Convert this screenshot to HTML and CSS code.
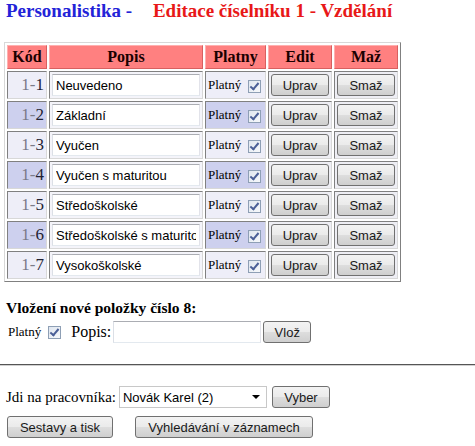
FILE: index.html
```html
<!DOCTYPE html>
<html lang="cs">
  <head>
    <meta charset="UTF-8" />
    <title>Personalistika - Editace číselníku</title>
    <link rel="stylesheet" href="styles.css">
  </head>
  <body>
    <div class="page">
      <h1 class="title">
        <span class="app">Personalistika -</span>
        <span class="sub">Editace číselníku 1 - Vzdělání</span>
      </h1>

      <table class="list">
        <thead>
          <tr>
            <th class="c-kod">Kód</th>
            <th class="c-popis">Popis</th>
            <th class="c-platny">Platny</th>
            <th class="c-edit">Edit</th>
            <th class="c-maz">Maž</th>
          </tr>
        </thead>
        <tbody>
          <tr class="odd">
            <td class="kod"><span class="pre">1-</span>1</td>
            <td class="popis"><input type="text" class="txt" value="Neuvedeno" /></td>
            <td class="platny">Platný <input type="checkbox" class="chk" checked /></td>
            <td class="act"><button class="btn btn-row">Uprav</button></td>
            <td class="act"><button class="btn btn-row">Smaž</button></td>
          </tr>
          <tr class="even">
            <td class="kod"><span class="pre">1-</span>2</td>
            <td class="popis"><input type="text" class="txt" value="Základní" /></td>
            <td class="platny">Platný <input type="checkbox" class="chk" checked /></td>
            <td class="act"><button class="btn btn-row">Uprav</button></td>
            <td class="act"><button class="btn btn-row">Smaž</button></td>
          </tr>
          <tr class="odd">
            <td class="kod"><span class="pre">1-</span>3</td>
            <td class="popis"><input type="text" class="txt" value="Vyučen" /></td>
            <td class="platny">Platný <input type="checkbox" class="chk" checked /></td>
            <td class="act"><button class="btn btn-row">Uprav</button></td>
            <td class="act"><button class="btn btn-row">Smaž</button></td>
          </tr>
          <tr class="even">
            <td class="kod"><span class="pre">1-</span>4</td>
            <td class="popis"><input type="text" class="txt" value="Vyučen s maturitou" /></td>
            <td class="platny">Platný <input type="checkbox" class="chk" checked /></td>
            <td class="act"><button class="btn btn-row">Uprav</button></td>
            <td class="act"><button class="btn btn-row">Smaž</button></td>
          </tr>
          <tr class="odd">
            <td class="kod"><span class="pre">1-</span>5</td>
            <td class="popis"><input type="text" class="txt" value="Středoškolské" /></td>
            <td class="platny">Platný <input type="checkbox" class="chk" checked /></td>
            <td class="act"><button class="btn btn-row">Uprav</button></td>
            <td class="act"><button class="btn btn-row">Smaž</button></td>
          </tr>
          <tr class="even">
            <td class="kod"><span class="pre">1-</span>6</td>
            <td class="popis"><input type="text" class="txt" value="Středoškolské s maturitou" /></td>
            <td class="platny">Platný <input type="checkbox" class="chk" checked /></td>
            <td class="act"><button class="btn btn-row">Uprav</button></td>
            <td class="act"><button class="btn btn-row">Smaž</button></td>
          </tr>
          <tr class="odd">
            <td class="kod"><span class="pre">1-</span>7</td>
            <td class="popis"><input type="text" class="txt" value="Vysokoškolské" /></td>
            <td class="platny">Platný <input type="checkbox" class="chk" checked /></td>
            <td class="act"><button class="btn btn-row">Uprav</button></td>
            <td class="act"><button class="btn btn-row">Smaž</button></td>
          </tr>
        </tbody>
      </table>

      <h3 class="new-head">Vložení nové položky číslo 8:</h3>
      <div class="new-row">
        <span class="small">Platný</span>
        <input type="checkbox" class="chk" checked />
        <span class="lbl">Popis:</span>
        <input type="text" class="txt txt-new" />
        <button class="btn btn-vloz">Vlož</button>
      </div>
    </div>

    <hr class="sep" />

    <div class="page">
      <div class="go-row">
        <span class="lbl">Jdi na pracovníka:</span>
        <span class="sel-wrap">
          <select class="sel">
            <option>Novák Karel (2)</option>
          </select>
        </span>
        <button class="btn btn-vyber">Vyber</button>
      </div>
      <div class="bottom-row">
        <button class="btn btn-tisk">Sestavy a tisk</button>
        <button class="btn btn-hledat">Vyhledávání v záznamech</button>
      </div>
    </div>
  </body>
</html>
```

FILE: styles.css
```css
* {
  box-sizing: border-box;
}
body {
  margin: 0;
  padding: 0;
  background: #ffffff;
  font-family: "Liberation Serif", "Times New Roman", serif;
  font-size: 16px;
  color: #000000;
}
.page {
  padding: 0 4px;
}
.title {
  margin: 0;
  padding-left: 2px;
  font-size: 19px;
  line-height: 22px;
  font-weight: bold;
  white-space: nowrap;
}
.title .app {
  color: #2323d8;
}
.title .sub {
  color: #e81818;
  margin-left: 16px;
}

/* table */
.list {
  margin-top: 20px;
  border: 1px solid;
  border-color: #d8d8d8 #808080 #808080 #d8d8d8;
  border-spacing: 2px;
  table-layout: fixed;
}
.list th,
.list td {
  border: 1px solid;
  border-color: #808080 #d8d8d8 #d8d8d8 #808080;
  padding: 0 2px;
  height: 28px;
}
.list th {
  height: 24px;
  background: #ff8080;
  color: #1a0000;
  font-size: 16px;
  font-weight: bold;
  border-color: #ffb0b0 #d86060 #d86060 #ffb0b0;
}
.c-kod { width: 40px; }
.c-popis { width: 153px; }
.c-platny { width: 61px; }
.c-edit { width: 64px; }
.c-maz { width: 63px; }

.kod {
  text-align: right;
  font-size: 17px;
  color: #222233;
}
.kod .pre {
  color: #7a7a88;
}
.odd .kod,
.odd .platny {
  background: #eeeef8;
}
.even .kod,
.even .platny {
  background: #cdd0ee;
}
.popis {
  background: #f4f4fa;
}
.act {
  background: #eeeef4;
  text-align: center;
}
.platny {
  font-family: "Liberation Serif", "Times New Roman", serif;
  font-size: 13px;
  white-space: nowrap;
  padding-left: 1px;
}

/* inputs */
.txt {
  height: 22px;
  width: 148px;
  border: 1px solid;
  border-color: #abadb3 #e2e3ea #e3e9ef #dbdfe6;
  background: #ffffff;
  font-family: "Liberation Sans", Arial, sans-serif;
  font-size: 13px;
  padding: 0 3px;
  margin: 0;
  vertical-align: middle;
  color: #000000;
}
.chk {
  appearance: none;
  -webkit-appearance: none;
  width: 13px;
  height: 13px;
  margin: 0 0 0 4px;
  border: 1px solid #8e9fb5;
  background: linear-gradient(135deg, #dfe6f0, #f6f8fb);
  position: relative;
  vertical-align: middle;
}
.chk:checked::after {
  content: "";
  position: absolute;
  left: 3px;
  top: 0px;
  width: 3px;
  height: 7px;
  border: solid #4a5f97;
  border-width: 0 2px 2px 0;
  transform: rotate(40deg);
}
.btn {
  height: 22px;
  border: 1px solid #707070;
  border-radius: 3px;
  background: linear-gradient(#f3f3f3 0%, #ebebeb 48%, #dddddd 52%, #cfcfcf 100%);
  font-family: "Liberation Sans", Arial, sans-serif;
  font-size: 13px;
  color: #1a1a1a;
  padding: 0 6px;
  margin: 0;
  vertical-align: middle;
}
.btn-row {
  width: 58px;
}

/* new item */
.new-head {
  margin: 16px 0 0 2px;
  font-size: 15.5px;
  line-height: 20px;
}
.new-row {
  display: flex;
  align-items: center;
  margin-top: 3px;
  padding-left: 4px;
  height: 22px;
}
.new-row .small {
  font-family: "Liberation Serif", "Times New Roman", serif;
  font-size: 13px;
}
.new-row .chk {
  margin-left: 7px;
}
.new-row .lbl {
  margin-left: 10px;
  margin-right: 2px;
  font-size: 16px;
}
.txt-new {
  width: 148px;
}
.btn-vloz {
  width: 48px;
  margin-left: 2px;
}

.sep {
  margin: 21px 0 0;
  border: none;
  border-top: 1px solid #555555;
  border-bottom: 1px solid #d0d0d0;
}

/* bottom */
.go-row {
  display: flex;
  align-items: center;
  margin-top: 20px;
  padding-left: 2px;
  height: 22px;
}
.go-row .lbl {
  font-family: "Liberation Serif", "Times New Roman", serif;
  font-size: 15px;
  margin-right: 3px;
}
.sel-wrap {
  position: relative;
  display: inline-block;
}
.sel {
  appearance: none;
  -webkit-appearance: none;
  width: 148px;
  height: 22px;
  border: 1px solid #c8c8c8;
  background: #ffffff;
  font-family: "Liberation Sans", Arial, sans-serif;
  font-size: 13px;
  padding: 0 3px;
  color: #000000;
}
.sel-wrap::after {
  content: "";
  position: absolute;
  right: 7px;
  top: 9px;
  border-left: 4px solid transparent;
  border-right: 4px solid transparent;
  border-top: 4px solid #000000;
}
.btn-vyber {
  width: 58px;
  margin-left: 5px;
}
.bottom-row {
  display: flex;
  margin-top: 8px;
  padding-left: 3px;
}
.btn-tisk {
  width: 106px;
}
.btn-hledat {
  width: 178px;
  margin-left: 22px;
}
```
